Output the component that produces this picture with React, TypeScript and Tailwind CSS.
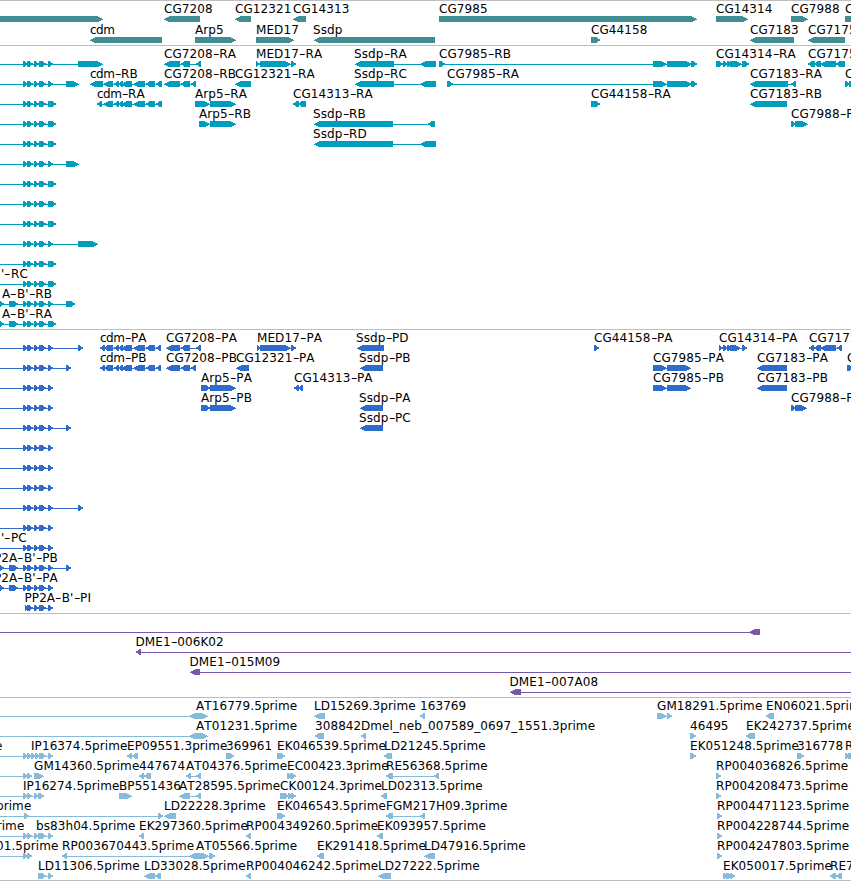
import React from "react";

type Label = [number, string];
type Row = { f: string; t?: Label[] };

// Feature notation: "=a:b" intron line, ">a:b" forward block, "<a:b" reverse block.
const PP = ">23:28 >27:33 >34:39 >39:46";
const CDM = "<103:113 <114:119 <118:123 <121:132 <133:145 <146:155 <156:162";
const CDP = "=100:161 <100:105 <104:113 <114:119 <118:123 <121:132 <133:145 <146:155 <156:161";

const genes: Row[] = [
  {
    f: ">-9:103 <164:200 <235:251 <293:306 >439:697 >716:748 >791:808 >845:870",
    t: [[164, "CG7208"], [235, "CG12321"], [293, "CG14313"], [439, "CG7985"], [716, "CG14314"], [791, "CG7988"], [845, "C"]],
  },
  {
    f: "<90:162 >195:236 >256:294 <314:435 >591:600 <750:794 <808:845",
    t: [[90, "cdm"], [195, "Arp5"], [256, "MED17"], [313, "Ssdp"], [591, "CG44158"], [750, "CG7183"], [808, "CG7175"]],
  },
];

const mrna: Row[] = [
  {
    f: `=0:78 ${PP} >48:53 >78:103 =164:201 <164:180 <181:190 <196:201 >256:260 >260:291 >291:296 =355:436 <355:394 <420:436 =439:697 >439:445 >653:667 >667:692 >691:697 =716:749 >716:723 >723:728 >727:732 >730:742 >742:749 =808:845 <808:815 <814:821 <820:836 <836:845`,
    t: [[164, "CG7208-RA"], [256, "MED17-RA"], [354, "Ssdp-RA"], [439, "CG7985-RB"], [716, "CG14314-RA"], [808, "CG7175-RA"]],
  },
  {
    f: `=0:66 ${PP} >48:53 >66:79 =90:162 <90:103 ${CDM} =164:196 <164:180 <181:190 <191:196 <235:251 =355:436 <355:394 <420:436 =447:697 >447:453 >653:667 >667:692 >691:697 =750:796 <750:788 <791:796 >845:850 >849:856`,
    t: [[90, "cdm-RB"], [164, "CG7208-RB"], [235, "CG12321-RA"], [354, "Ssdp-RC"], [447, "CG7985-RA"], [750, "CG7183-RA"], [845, "C"]],
  },
  {
    f: `=0:50 ${PP} >48:56 =97:162 <97:102 ${CDM} >195:210 >210:236 <293:299 <298:306 >591:600 <750:787`,
    t: [[97, "cdm-RA"], [195, "Arp5-RA"], [293, "CG14313-RA"], [591, "CG44158-RA"], [750, "CG7183-RB"]],
  },
  {
    f: `=0:50 ${PP} >48:56 >199:210 >210:236 =314:435 <314:393 <428:435 >791:796 >795:808`,
    t: [[199, "Arp5-RB"], [313, "Ssdp-RB"], [791, "CG7988-RA"]],
  },
  { f: `=0:50 ${PP} >48:56 =314:436 <314:393 <420:436`, t: [[313, "Ssdp-RD"]] },
  { f: `=0:66 ${PP} >48:53 >66:79` },
  { f: `=0:50 ${PP} >48:56` },
  { f: `=0:50 ${PP} >48:56` },
  { f: `=0:50 ${PP} >48:56` },
  { f: `=0:78 ${PP} >48:53 >78:98` },
  { f: `=0:50 ${PP} >48:56` },
  { f: `=0:50 ${PP} >48:56`, t: [[1, "'-RC"]] },
  { f: `=0:66 >-1:4 >9:18 ${PP} >48:53 >66:75`, t: [[2, "A-B'-RB"]] },
  { f: `=0:50 >-1:4 >9:18 ${PP} >48:56`, t: [[2, "A-B'-RA"]] },
];

const protein: Row[] = [
  {
    f: `=0:78 ${PP} >48:53 >78:83 ${CDP} =166:201 <166:180 <181:190 <196:201 >257:261 >260:291 >291:296 <357:384 >594:599 =719:747 >719:723 >723:728 >727:732 >730:741 >742:747 =809:842 <809:814 <814:821 <820:836 <837:842`,
    t: [[100, "cdm-PA"], [166, "CG7208-PA"], [257, "MED17-PA"], [356, "Ssdp-PD"], [594, "CG44158-PA"], [719, "CG14314-PA"], [809, "CG7175-PA"]],
  },
  {
    f: `=0:66 ${PP} >48:53 >66:71 ${CDP} =166:196 <166:180 <181:190 <191:196 <236:249 <360:383 >653:667 >667:691 <757:787 >847:853`,
    t: [[100, "cdm-PB"], [166, "CG7208-PB"], [236, "CG12321-PA"], [359, "Ssdp-PB"], [653, "CG7985-PA"], [757, "CG7183-PA"], [847, "C"]],
  },
  {
    f: `=0:50 ${PP} >48:53 >201:210 >210:236 <294:299 <298:303 >653:667 >667:691 <757:787`,
    t: [[201, "Arp5-PA"], [294, "CG14313-PA"], [653, "CG7985-PB"], [757, "CG7183-PB"]],
  },
  {
    f: `=0:50 ${PP} >48:53 >201:210 >210:236 <360:383 >791:796 >795:807`,
    t: [[201, "Arp5-PB"], [359, "Ssdp-PA"], [791, "CG7988-PA"]],
  },
  { f: `=0:66 ${PP} >48:53 >66:71 <360:383`, t: [[359, "Ssdp-PC"]] },
  { f: `=0:50 ${PP} >48:53` },
  { f: `=0:50 ${PP} >48:53` },
  { f: `=0:50 ${PP} >48:53` },
  { f: `=0:78 ${PP} >48:53 >78:83` },
  { f: `=0:50 ${PP} >48:53` },
  { f: `=0:50 ${PP} >48:53`, t: [[1, "'-PC"]] },
  { f: `=0:66 >-1:4 >9:18 ${PP} >48:53 >66:71`, t: [[-6, "P2A-B'-PB"]] },
  { f: `=0:50 >-1:4 >9:18 ${PP} >48:53`, t: [[-6, "P2A-B'-PA"]] },
  { f: "=25:50 >25:29 >27:33 >34:39 >39:46 >48:53", t: [[24.5, "PP2A-B'-PI"]] },
];

const bacs: Row[] = [
  { f: "=0:750 <749:760" },
  { f: "=140:851 <136:141", t: [[135.5, "DME1-006K02"]] },
  { f: "=195:851 <190:200", t: [[189.5, "DME1-015M09"]] },
  { f: "=515:851 <510:521", t: [[509.5, "DME1-007A08"]] },
];

const ests: Row[] = [
  {
    f: "=0:190 <189:200 >195:208 <314:325 <420:425 >657:667 >667:672 =657:670 <766:774",
    t: [[196, "AT16779.5prime"], [314, "LD15269.3prime"], [420, "163769"], [657, "GM18291.5prime"], [766, "EN06021.5prime"]],
  },
  {
    f: "=0:190 <189:200 >195:208 <315:324 <361:366 >690:696 <746:755",
    t: [[196, "AT01231.5prime"], [315, "308842"], [361, "Dmel_neb_007589_0697_1551.3prime"], [690, "46495"], [746, "EK242737.5prime"]],
  },
  {
    f: "=0:50 >23:28 >27:32 >31:36 >35:40 >39:46 >48:53 <127:132 <132:138 >226:234 >277:285 <384:392 >690:696 >797:804 >845:850 >848:854",
    t: [[-5, "e"], [31, "IP16374.5prime"], [127, "EP09551.3prime"], [226, "369961"], [277, "EK046539.5prime"], [384, "LD21245.5prime"], [690, "EK051248.5prime"], [797, "316778"], [845, "R"]],
  },
  {
    f: "=0:30 >23:28 >27:32 >34:44 =139:148 <139:144 <144:151 =186:200 <186:191 <196:201 >287:292 >290:296 =386:438 <386:393 <434:439 >716:721",
    t: [[34, "GM14360.5prime"], [139, "447674"], [186, "AT04376.5prime"], [287, "EC00423.3prime"], [386, "RE56368.5prime"], [716, "RP004036826.5prime"]],
  },
  {
    f: "=0:40 >23:28 >27:32 >34:39 >38:44 >119:132 =179:200 <179:190 <196:201 >280:289 >288:293 >291:296 <381:387 >716:721",
    t: [[23, "IP16274.5prime"], [119, "BP551436"], [179, "AT28595.5prime"], [280, "CK00124.3prime"], [381, "LD02313.5prime"], [716, "RP004208473.5prime"]],
  },
  {
    f: "=0:160 >24:29 >158:163 <164:176 >277:285 =386:424 <386:393 <420:425 >717:722",
    t: [[-4, "prime"], [164, "LD22228.3prime"], [277, "EK046543.5prime"], [386, "FGM217H09.3prime"], [717, "RP004471123.5prime"]],
  },
  {
    f: "=0:50 >23:28 >27:32 >34:39 >38:46 >48:53 <139:144 <246:251 <377:383 >717:722",
    t: [[-11, "prime"], [36, "bs83h04.5prime"], [139, "EK297360.5prime"], [246, "RP004349260.5prime"], [377, "EK093957.5prime"], [717, "RP004228744.5prime"]],
  },
  {
    f: "=0:30 >23:28 >27:32 =64:212 <62:67 <189:200 >195:209 >209:215 <317:324 <424:435 >717:722",
    t: [[-4, "01.5prime"], [62, "RP003670443.5prime"], [196, "AT05566.5prime"], [317, "EK291418.5prime"], [424, "LD47916.5prime"], [717, "RP004247803.5prime"]],
  },
  {
    f: "=38:50 >38:46 >48:53 =144:158 <144:155 <155:161 <246:251 <378:391 >723:728 >726:732 >730:735 =830:840 <830:836 <836:842",
    t: [[38, "LD11306.5prime"], [144, "LD33028.5prime"], [246, "RP004046242.5prime"], [378, "LD27222.5prime"], [723, "EK050017.5prime"], [830, "RE73310"]],
  },
];

// Distance of each pixel row of a block from the arrow's tip.
const SHORT_HEAD = [3, 2, 0, 0, 2, 3];
const LONG_HEAD = [5, 3, 1, 0, 2, 4];

function Feature({ code }: { code: string }) {
  const [a, b] = code.slice(1).split(":").map(Number);
  if (code[0] === "=") return <rect x={a} y={18} width={b - a} height={1} />;
  const head = b - a > 9 ? LONG_HEAD : SHORT_HEAD;
  const d = head
    .map((inset, i) => `M${code[0] === ">" ? a : a + inset} ${15 + i}h${Math.max(1, b - a - inset)}v1H${code[0] === ">" ? a : a + inset}z`)
    .join("");
  return <path d={d} />;
}

function FeatureName({ text }: { text: string }) {
  return (
    <>
      {text.split(/(-|cdm)/).map((part, i) => {
        if (part === "-") return <span key={i} className="mx-[1.1px] inline-block scale-x-[1.5]">-</span>;
        if (part === "cdm") return <span key={i} className="tracking-[-0.5px]">cdm</span>;
        return part;
      })}
    </>
  );
}

function Track({ rows, color, rowHeight, pad }: { rows: Row[]; color: string; rowHeight: string; pad: string }) {
  return (
    <section className={`border-b border-[#bebebe] ${pad}`}>
      {rows.map((row, i) => (
        <div key={i} className={`relative ${rowHeight}`}>
          <svg width="851" height="22" shapeRendering="crispEdges" className={`block overflow-hidden ${color}`}>
            {row.f.split(" ").map((code, k) => (
              <Feature key={k} code={code} />
            ))}
          </svg>
          {row.t?.map(([x, text]) => (
            <span key={text + x} className="absolute top-px whitespace-pre leading-[14px]" style={{ left: x }}>
              <FeatureName text={text} />
            </span>
          ))}
        </div>
      ))}
    </section>
  );
}

export default function App() {
  return (
    <main className="h-[881px] w-[851px] overflow-hidden border-t border-[#bebebe] bg-white font-['DejaVu_Sans',sans-serif] text-[12px] tracking-[0.08px] text-black [font-kerning:none]">
      <Track rows={genes} color="fill-[#3e8e93]" rowHeight="h-[21px]" pad="pb-[2px]" />
      <Track rows={mrna} color="fill-[#009dbf]" rowHeight="h-5" pad="pb-[3px]" />
      <Track rows={protein} color="fill-[#2f6bcb]" rowHeight="h-5" pad="pb-[3px]" />
      <Track rows={bacs} color="fill-[#7758a9]" rowHeight="h-5" pad="pb-[3px]" />
      <Track rows={ests} color="fill-[#86bbdc]" rowHeight="h-5" pad="pb-[2px]" />
    </main>
  );
}
